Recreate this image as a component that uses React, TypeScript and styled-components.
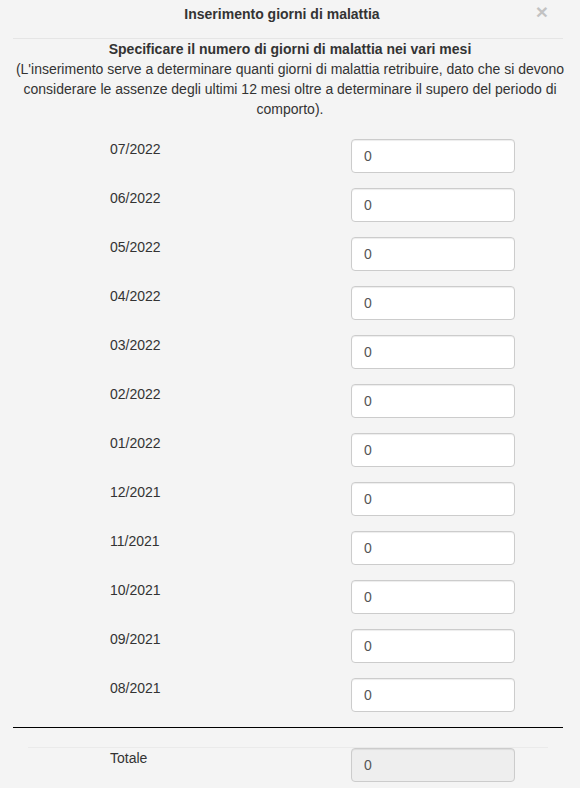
import React from "react";
import styled, { createGlobalStyle } from "styled-components";

const GlobalStyle = createGlobalStyle`
  html, body {
    margin: 0;
    padding: 0;
    background: #f4f4f4;
  }
  body {
    font-family: "Liberation Sans", Arial, Helvetica, sans-serif;
    font-size: 14px;
    line-height: 20px;
    color: #333;
  }
  * { box-sizing: border-box; }
`;

const Modal = styled.div`
  width: 580px;
  background: #f4f4f4;
`;

const Header = styled.div`
  position: relative;
  margin: 0 17px 0 13px;
  padding: 4px 12px 14px 0;
  border-bottom: 1px solid #e5e5e5;
  text-align: center;
`;

const Title = styled.h4`
  margin: 0;
  font-size: 14px;
  line-height: 20px;
  font-weight: bold;
  color: #333;
`;

const CloseButton = styled.button`
  position: absolute;
  right: 15px;
  top: 1px;
  padding: 0;
  border: 0;
  background: transparent;
  font-family: "Liberation Sans", Arial, sans-serif;
  font-size: 21px;
  font-weight: bold;
  line-height: 21px;
  color: #000;
  opacity: 0.2;
  cursor: pointer;
`;

const Intro = styled.div`
  padding: 0 6px;
  text-align: center;
`;

const Lead = styled.strong`
  font-weight: bold;
`;

const Form = styled.div`
  margin-top: 20px;
`;

const Row = styled.div`
  display: grid;
  grid-template-columns: 241px 164px;
  padding-left: 110px;
  margin-bottom: 15px;
`;

const Label = styled.label`
  font-size: 14px;
  line-height: 20px;
  color: #333;
`;

const Input = styled.input<{ $readOnly?: boolean }>`
  width: 164px;
  height: 34px;
  padding: 6px 12px;
  border: 1px solid #ccc;
  border-radius: 4px;
  background: ${(p) => (p.$readOnly ? "#eee" : "#fff")};
  box-shadow: inset 0 1px 1px rgba(0, 0, 0, 0.075);
  font-family: "Liberation Sans", Arial, sans-serif;
  font-size: 14px;
  line-height: 20px;
  color: #555;
  outline: none;
`;

const Divider = styled.hr`
  margin: 0 17px 19px 13px;
  border: 0;
  border-top: 1px solid #000;
  height: 0;
`;

const TotalSection = styled.div`
  margin: 0 32px 0 28px;
  border-top: 1px solid #eaeaea;
`;

const TotalRow = styled.div`
  display: grid;
  grid-template-columns: 241px 164px;
  padding-left: 82px;
`;

const months = [
  "07/2022",
  "06/2022",
  "05/2022",
  "04/2022",
  "03/2022",
  "02/2022",
  "01/2022",
  "12/2021",
  "11/2021",
  "10/2021",
  "09/2021",
  "08/2021",
];

export default function App() {
  return (
    <>
      <GlobalStyle />
      <Modal>
        <Header>
          <Title>Inserimento giorni di malattia</Title>
          <CloseButton aria-label="Chiudi">×</CloseButton>
        </Header>
        <Intro>
          <Lead>Specificare il numero di giorni di malattia nei vari mesi</Lead>
          <br />
          (L'inserimento serve a determinare quanti giorni di malattia retribuire, dato che si
          devono considerare le assenze degli ultimi 12 mesi oltre a determinare il supero del
          periodo di comporto).
        </Intro>
        <Form>
          {months.map((m) => (
            <Row key={m}>
              <Label>{m}</Label>
              <Input type="text" defaultValue="0" />
            </Row>
          ))}
        </Form>
        <Divider />
        <TotalSection>
          <TotalRow>
            <Label>Totale</Label>
            <Input type="text" value="0" readOnly $readOnly />
          </TotalRow>
        </TotalSection>
      </Modal>
    </>
  );
}
